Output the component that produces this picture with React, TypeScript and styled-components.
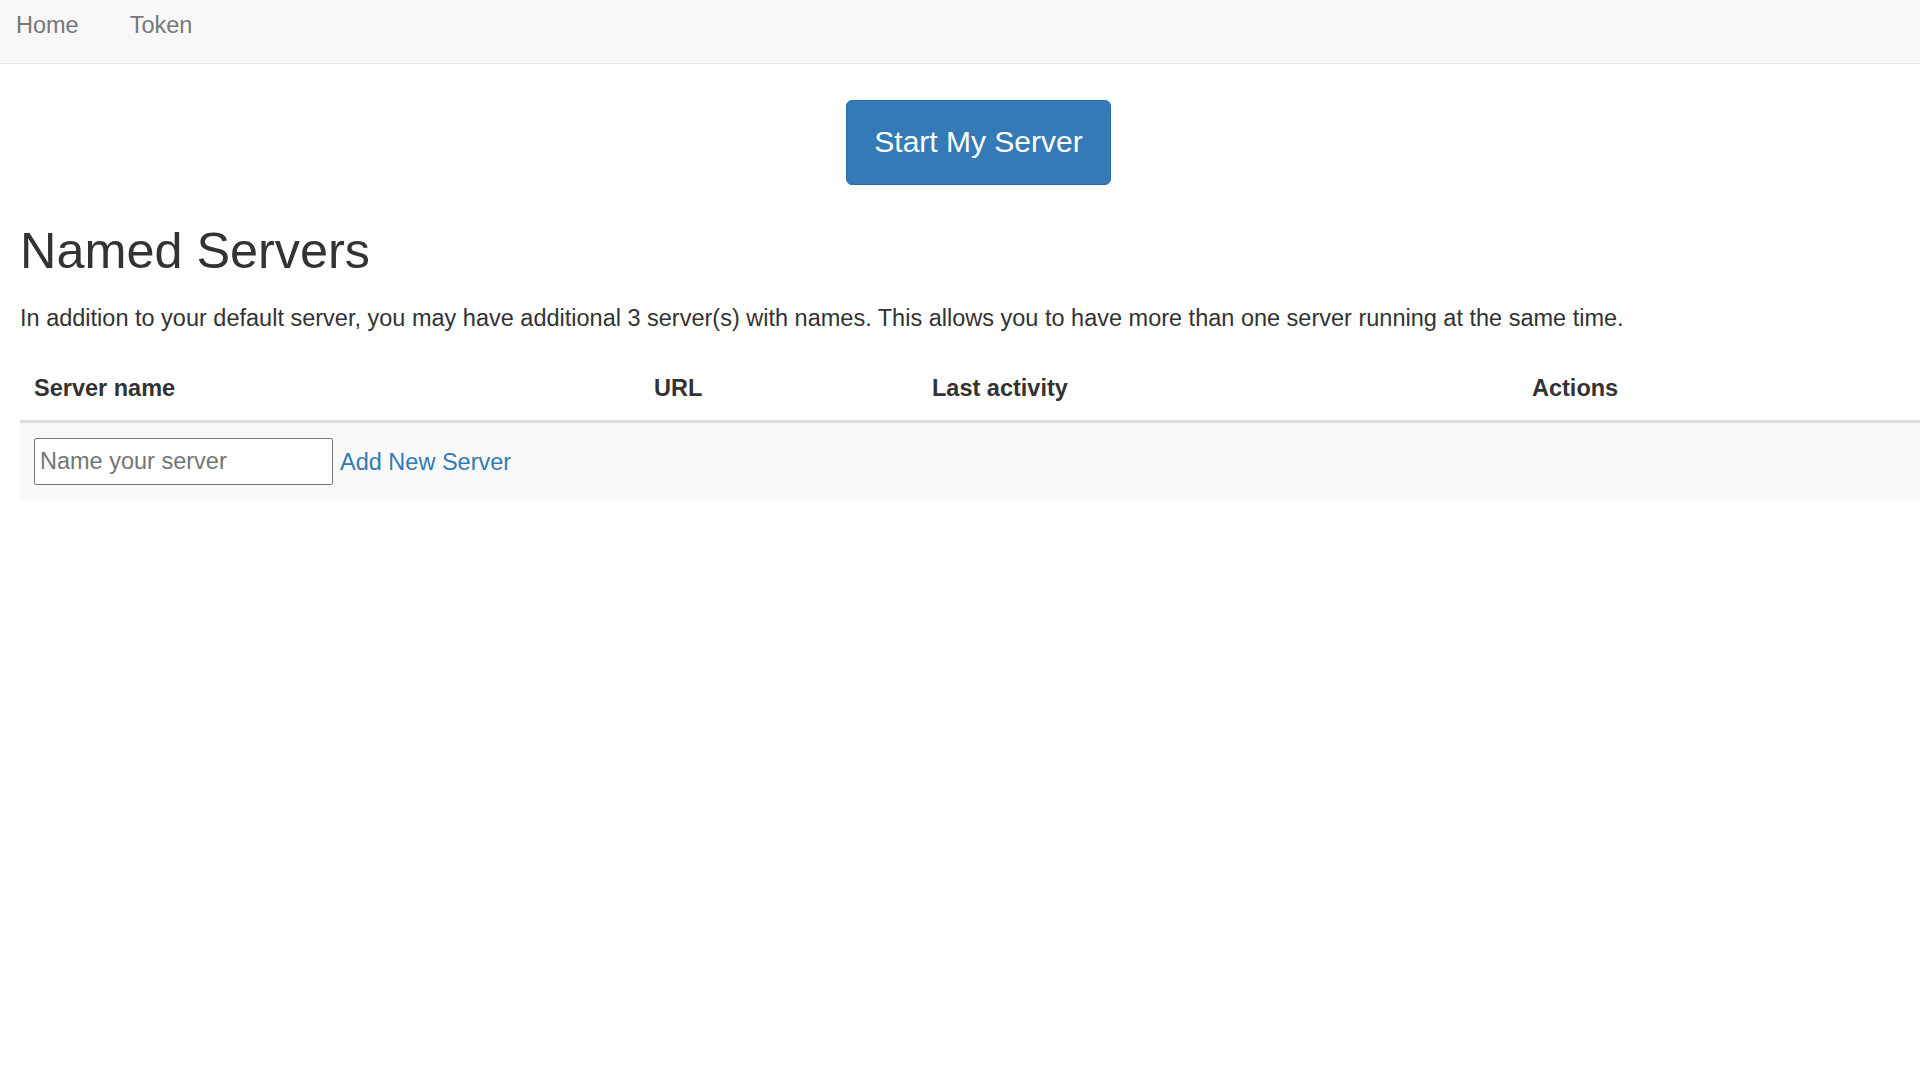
import React from "react";
import styled, { createGlobalStyle } from "styled-components";

const GlobalStyle = createGlobalStyle`
  html, body {
    margin: 0;
    padding: 0;
    overflow-x: hidden;
    background: #ffffff;
  }
  body {
    font-family: "Liberation Sans", Arial, Helvetica, sans-serif;
    font-size: 23.5px;
    color: #333333;
  }
  * { box-sizing: border-box; }
`;

const NavBar = styled.nav`
  height: 64px;
  background: #f8f8f8;
  border-bottom: 1px solid #e7e7e7;
  display: flex;
  align-items: flex-start;
  gap: 51px;
  padding: 10px 0 0 16px;
`;

const NavLink = styled.a`
  font-size: 23.5px;
  line-height: 30px;
  color: #777777;
  text-decoration: none;
`;

const Container = styled.main`
  margin-left: 20px;
  width: 1917px;
`;

const Center = styled.div`
  display: flex;
  justify-content: center;
  margin-top: 36px;
`;

const PrimaryButton = styled.a`
  display: inline-block;
  height: 85px;
  padding: 0 27px 1px;
  font-size: 30px;
  line-height: 82px;
  color: #ffffff;
  background: #337ab7;
  border: 1px solid #2e6da4;
  border-radius: 6px;
  text-decoration: none;
  white-space: nowrap;
`;

const Heading = styled.h2`
  margin: 38px 0 0;
  font-size: 50.4px;
  font-weight: 400;
  line-height: 56px;
  color: #333333;
`;

const Lead = styled.p`
  margin: 23px 0 0;
  line-height: 32px;
`;

const Table = styled.table`
  margin-top: 25px;
  width: 100%;
  border-collapse: collapse;
  table-layout: fixed;
`;

const HeadCell = styled.th<{ $w?: number }>`
  width: ${(p) => (p.$w ? `${p.$w}px` : "auto")};
  text-align: left;
  font-weight: 700;
  line-height: 32px;
  padding: 13px 14px 16px;
  border-bottom: 3px solid #dddddd;
`;

const StripedRow = styled.tr`
  background: #f9f9f9;
`;

const Cell = styled.td`
  padding: 15px 14px;
`;

const AddRow = styled.div`
  display: flex;
  align-items: center;
  gap: 7px;
`;

const NameInput = styled.input`
  width: 299px;
  height: 47px;
  padding: 0 5px;
  font-family: "Liberation Sans", Arial, sans-serif;
  font-size: 23.5px;
  color: #333333;
  background: #ffffff;
  border: 1px solid #767676;
  border-radius: 2px;
  &::placeholder {
    color: #757575;
  }
`;

const TextLink = styled.a`
  font-size: 23.5px;
  line-height: 32px;
  color: #337ab7;
  text-decoration: none;
`;

export default function App() {
  return (
    <>
      <GlobalStyle />
      <NavBar>
        <NavLink href="#">Home</NavLink>
        <NavLink href="#">Token</NavLink>
      </NavBar>
      <Container>
        <Center>
          <PrimaryButton role="button" href="#">
            Start My Server
          </PrimaryButton>
        </Center>
        <Heading>Named Servers</Heading>
        <Lead>
          In addition to your default server, you may have additional 3 server(s) with names. This allows you to have
          more than one server running at the same time.
        </Lead>
        <Table>
          <thead>
            <tr>
              <HeadCell $w={620}>Server name</HeadCell>
              <HeadCell $w={278}>URL</HeadCell>
              <HeadCell $w={600}>Last activity</HeadCell>
              <HeadCell>Actions</HeadCell>
            </tr>
          </thead>
          <tbody>
            <StripedRow>
              <Cell colSpan={4}>
                <AddRow>
                  <NameInput placeholder="Name your server" />
                  <TextLink role="button" href="#">
                    Add New Server
                  </TextLink>
                </AddRow>
              </Cell>
            </StripedRow>
          </tbody>
        </Table>
      </Container>
    </>
  );
}
